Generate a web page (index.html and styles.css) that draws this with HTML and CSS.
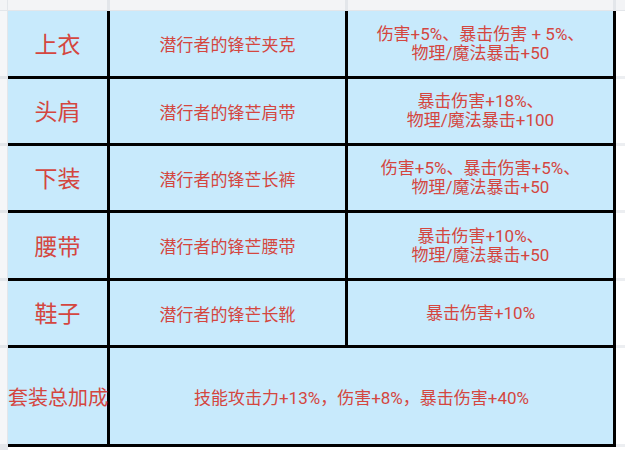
FILE: index.html
```html
<!DOCTYPE html>
<html lang="zh-CN">
<head>
<meta charset="utf-8">
<link rel="stylesheet" href="styles.css">
</head>
<body>
<div class="sheet">
  <div class="hd corner"></div>
  <div class="hd"></div>
  <div class="hd"></div>
  <div class="hd"></div>
  <div class="hd last"></div>

  <div class="side"></div>
  <div class="cell name">上衣</div>
  <div class="cell item">潜行者的锋芒夹克</div>
  <div class="cell bonus">伤害+5%、暴击伤害 + 5%、<br>物理/魔法暴击+50</div>
  <div class="blank"></div>

  <div class="side"></div>
  <div class="cell name">头肩</div>
  <div class="cell item">潜行者的锋芒肩带</div>
  <div class="cell bonus">暴击伤害+18%、<br>物理/魔法暴击+100</div>
  <div class="blank"></div>

  <div class="side"></div>
  <div class="cell name">下装</div>
  <div class="cell item">潜行者的锋芒长裤</div>
  <div class="cell bonus">伤害+5%、暴击伤害+5%、<br>物理/魔法暴击+50</div>
  <div class="blank"></div>

  <div class="side"></div>
  <div class="cell name">腰带</div>
  <div class="cell item">潜行者的锋芒腰带</div>
  <div class="cell bonus">暴击伤害+10%、<br>物理/魔法暴击+50</div>
  <div class="blank"></div>

  <div class="side"></div>
  <div class="cell name">鞋子</div>
  <div class="cell item">潜行者的锋芒长靴</div>
  <div class="cell bonus">暴击伤害+10%</div>
  <div class="blank"></div>

  <div class="side"></div>
  <div class="cell name small">套装总加成</div>
  <div class="cell total">技能攻击力+13%，伤害+8%，暴击伤害+40%</div>
  <div class="blank"></div>

  <div class="side"></div>
  <div class="foot"></div>
  <div class="foot"></div>
  <div class="foot"></div>
  <div class="foot"></div>
</div>
</body>
</html>
```

FILE: styles.css
```css
* { box-sizing: border-box; }
html, body { margin: 0; padding: 0; }
body {
  width: 625px;
  height: 450px;
  overflow: hidden;
  background: #ffffff;
  font-family: Roboto, "Noto Sans CJK SC", sans-serif;
}
.sheet {
  display: grid;
  grid-template-columns: 8px 102px 238px 268px 1fr;
  grid-template-rows: 11px 68px 67px 67px 68px 67px 99px 1fr;
  height: 450px;
}
.hd {
  background: #f3f4f6;
  border-right: 3px solid #e3e6ea;
  border-bottom: 1px solid #e3e6ea;
}
.hd.corner { border-right: 1px solid #e3e6ea; }
.hd.last { border-right: none; }
.side {
  background: #f5f6f8;
  border-right: 1px solid #e3e6ea;
  border-bottom: 3px solid #e3e6ea;
}
.blank {
  background: #ffffff;
  border-bottom: 3px solid #eceef1;
}
.foot { background: #ffffff; }
.cell {
  background: #c8eafc;
  border-right: 3px solid #000;
  border-bottom: 3px solid #000;
  display: flex;
  align-items: center;
  justify-content: center;
  text-align: center;
  color: #d4463f;
}
.name {
  font-size: 23px;
  font-family: "Noto Sans CJK SC", sans-serif;
  padding-bottom: 2px;
}
.name.small {
  font-size: 20px;
  white-space: nowrap;
  justify-content: flex-start;
  padding-bottom: 0;
  overflow: visible;
}
.item {
  font-size: 17px;
  font-family: "Noto Sans CJK SC", sans-serif;
}
.bonus {
  font-size: 17px;
  line-height: 19px;
}
.total {
  grid-column: span 2;
  font-size: 17px;
}
```
